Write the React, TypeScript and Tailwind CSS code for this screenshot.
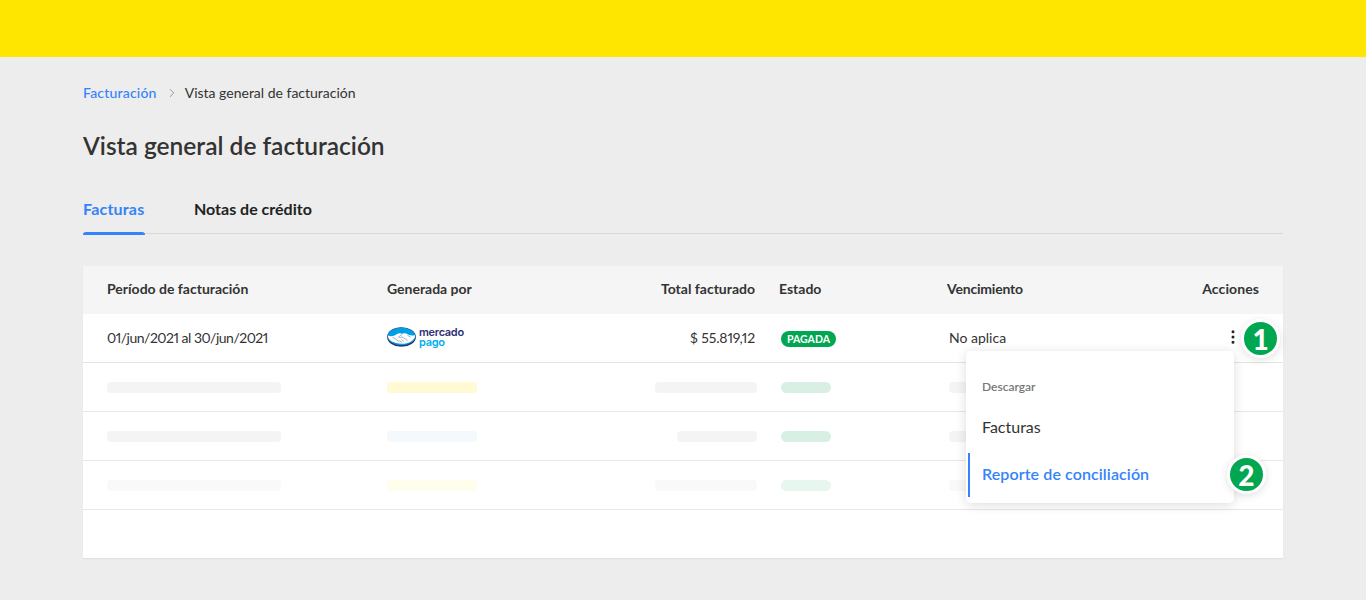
import { MoreVertical, ChevronRight } from "lucide-react";

const cols = "grid grid-cols-[280px_200px_192px_168px_1fr] items-center";

const rows = [
  { period: "bg-[#f4f4f4]", brand: "bg-[#fff9d4]", total: "w-[102px]", totalBg: "bg-[#f4f4f4]", state: "bg-[#d7f0e3]", due: "bg-[#f4f4f4]" },
  { period: "bg-[#f4f4f4]", brand: "bg-[#f3f9fc]", total: "w-[80px]", totalBg: "bg-[#f4f4f4]", state: "bg-[#d7f0e3]", due: "bg-[#f4f4f4]" },
  { period: "bg-[#f9f9f9]", brand: "bg-[#fffdeb]", total: "w-[102px]", totalBg: "bg-[#f9f9f9]", state: "bg-[#e7f6ee]", due: "bg-[#f9f9f9]" },
];

function MercadoPagoLogo() {
  return (
    <div className="flex items-center gap-[3px]">
      <svg width="29" height="20" viewBox="0 0 29 20">
        <ellipse cx="14.5" cy="10" rx="14.4" ry="9.8" fill="#2d3277" />
        <ellipse cx="14.5" cy="9.4" rx="13.8" ry="8.8" fill="#009ee3" />
        <path d="M0.9 8.6 C4 10 7 9 10 7 C12 5.8 14 6.4 15.5 6.8 C17.5 6 19 6.2 21 7.4 C23 8.4 25.5 8.6 28.1 8.2 C28.4 13 22 16.8 14.5 16.8 C7 16.8 0.8 13.4 0.9 8.6Z" fill="#ffffff" />
        <path d="M5.5 10.5 L8 11.5 L12.5 15 M15.5 7 L11.5 10 C12.5 11 14 10.5 15 9.8 L20.5 13.5 M23.5 10 L20.5 8.4 M14.5 12.5 L17 14.5 M12.5 13.5 L15 15.5" stroke="#8fa0c8" strokeWidth="0.8" fill="none" />
      </svg>
      <div className="-mt-[1px] flex flex-col font-['Inter',sans-serif] text-[11px] font-semibold leading-[10px] tracking-[-0.3px]">
        <span className="text-[#2d3277]">mercado</span>
        <span className="text-[#00aeef]">pago</span>
      </div>
    </div>
  );
}

function NumberBadge({ n }: { n: string }) {
  return (
    <div className="flex h-[39px] w-[39px] items-center justify-center rounded-full border-[3px] border-white bg-[#00a650] text-[28px] font-black leading-none text-white shadow-[0_2px_8px_rgba(0,0,0,0.12)]">
      {n}
    </div>
  );
}

export default function App() {
  return (
    <div className="h-[600px] overflow-hidden bg-[#ededed] font-['Lato',sans-serif] text-[#333333]">
      <div className="h-[57px] bg-[#ffe600]" />

      <div className="mx-[83px] w-[1200px]">
        <div className="mt-[28px] flex h-[16px] items-center text-[14px] leading-none">
          <span className="font-medium tracking-[0.2px] text-[#3483fa]">Facturación</span>
          <ChevronRight className="ml-[8px] mr-[6px] text-[#888888]" size={14} strokeWidth={1.5} />
          <span>Vista general de facturación</span>
        </div>

        <h1 className="mt-[30px] h-[30px] text-[24.5px] font-semibold leading-[30px]">Vista general de facturación</h1>

        <div className="mt-[31px] flex h-[42px] gap-[49px] border-b border-[#d9d9d9] text-[16px] font-bold">
          <div className="relative h-[42px] w-[62px] pt-[5px] tracking-[0.2px] text-[#3483fa]">
            Facturas
            <div className="absolute bottom-[-1px] left-0 h-[3px] w-full rounded-t-[3px] bg-[#3483fa]" />
          </div>
          <div className="pt-[5px] text-[#222222]">Notas de crédito</div>
        </div>

        <div className="relative mt-[32px] h-[292px] bg-white text-[14px] shadow-[0_1px_1px_rgba(0,0,0,0.05)]">
          <div className={`${cols} h-[48px] bg-[#f5f5f5] pb-[4px] pl-[24px] pr-[24px] font-bold`}>
            <div>Período de facturación</div>
            <div>Generada por</div>
            <div className="pr-[24px] text-right">Total facturado</div>
            <div>Estado</div>
            <div className="flex justify-between">
              <span className="tracking-[-0.2px]">Vencimiento</span>
              <span className="tracking-[0.1px]">Acciones</span>
            </div>
          </div>

          <div className={`${cols} h-[49px] border-b border-[#e4e4e4] pb-[2px] pl-[24px] pr-[24px]`}>
            <div className="tracking-[-0.5px] proportional-nums">01/jun/2021 al 30/jun/2021</div>
            <MercadoPagoLogo />
            <div className="pr-[24px] text-right tracking-[-0.15px] proportional-nums">$ 55.819,12</div>
            <div className="pl-[2px]">
              <span className="inline-flex h-[16px] w-[55px] items-center justify-center rounded-full bg-[#00a650] text-[10.5px] font-bold text-white">PAGADA</span>
            </div>
            <div className="flex items-center justify-between pl-[2px]">
              <span>No aplica</span>
              <MoreVertical className="mr-[17px] text-[#222222]" size={18} strokeWidth={2} />
            </div>
          </div>

          {rows.map((r, i) => (
            <div key={i} className={`${cols} h-[49px] border-b border-[#e8e8e8] pl-[24px] pr-[24px]`}>
              <div className={`h-[11px] w-[174px] rounded-[4px] ${r.period}`} />
              <div className={`h-[11px] w-[90px] rounded-[4px] ${r.brand}`} />
              <div className="flex justify-end pr-[22px]">
                <div className={`h-[11px] rounded-[4px] ${r.total} ${r.totalBg}`} />
              </div>
              <div className="pl-[2px]">
                <div className={`h-[11px] w-[50px] rounded-[6px] ${r.state}`} />
              </div>
              <div className="pl-[2px]">
                <div className={`h-[11px] w-[60px] rounded-[4px] ${r.due}`} />
              </div>
            </div>
          ))}

          <div className="absolute right-[3px] top-[53px]">
            <NumberBadge n="1" />
          </div>

          <div className="absolute left-[883px] top-[85px] h-[152px] w-[268px] rounded-[5px] bg-white shadow-[0_2px_12px_rgba(0,0,0,0.14)]">
            <div className="pl-[16px] pt-[30px] text-[12px] font-semibold leading-none text-[#777777]">Descargar</div>
            <div className="mt-[26px] pl-[16px] text-[16px] leading-none text-[#333333]">Facturas</div>
            <div className="relative ml-[2px] mt-[18px] flex h-[44px] items-center border-l-2 border-[#3483fa] pl-[12px] text-[16px] font-semibold tracking-[0.1px] text-[#3483fa]">
              <span className="-mt-[2px]">Reporte de conciliación</span>
              <div className="absolute right-[-32px] top-[2px]">
                <NumberBadge n="2" />
              </div>
            </div>
          </div>
        </div>
      </div>
    </div>
  );
}
